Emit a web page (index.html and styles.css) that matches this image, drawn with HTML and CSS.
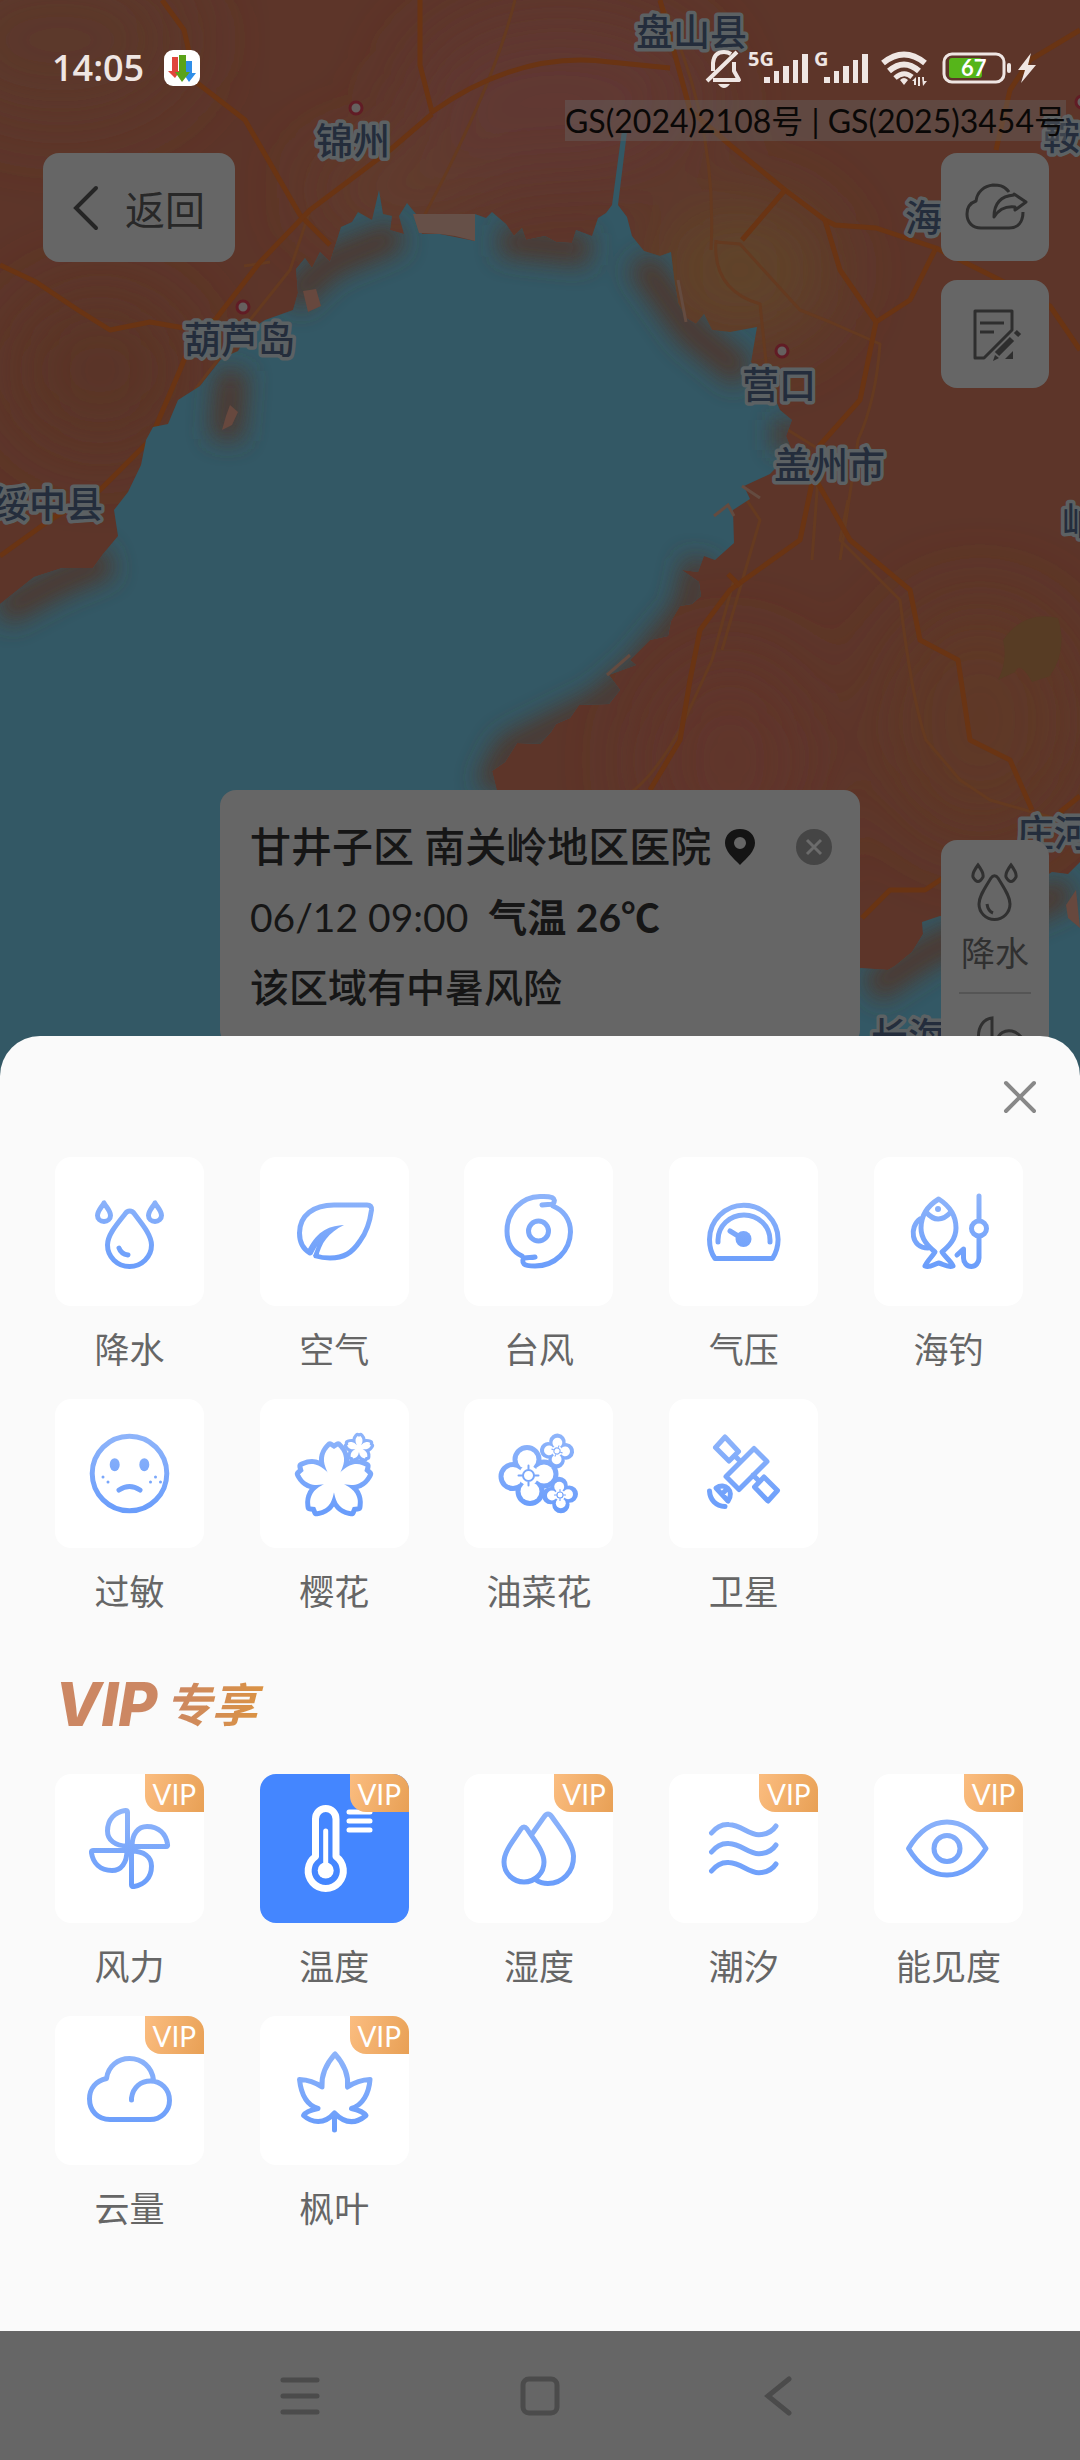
FILE: index.html
```html
<!DOCTYPE html>
<html lang="zh-CN">
<head>
  <meta charset="UTF-8" />
  <meta name="viewport" content="width=device-width, initial-scale=1.0"/>
  <title>天气地图</title>
  <link rel="stylesheet" href="styles.css">
</head>
<body>
  <!-- shared icon gradient -->
  <svg class="defs" width="0" height="0" aria-hidden="true">
    <defs>
      <linearGradient id="blue" gradientUnits="userSpaceOnUse" x1="0" y1="36" x2="0" y2="112">
        <stop offset="0" stop-color="#8eb4fa"/>
        <stop offset="1" stop-color="#6a9dfb"/>
      </linearGradient>
    </defs>
  </svg>

  <div class="screen">
    <main class="map">
      <svg class="map-canvas" viewBox="0 0 1080 1076" preserveAspectRatio="xMidYMin slice" aria-hidden="true">
        <defs>
          <filter id="soft" x="-50%" y="-50%" width="200%" height="200%"><feGaussianBlur stdDeviation="12"/></filter>
          <filter id="wide" x="-50%" y="-50%" width="200%" height="200%"><feGaussianBlur stdDeviation="40"/></filter>
          <path id="sea" d="M0 604L34 577L62 568L93 568L103 554L118 536L114 510L128 492L141 465L146 440L153 427L168 424L178 400L200 386L222 358L238 351L250 330L265 320L293 310L298 293L296 269L305 258L312 268L320 252L330 262L337 240L341 227L352 222L358 212L372 220L379 190L383 214L392 216L390 230L404 234L399 216L407 203L416 214L422 234L440 234L475 241L475 214L486 218L492 212L506 224L514 236L522 228L526 240L545 236L556 242L572 243L576 230L592 236L598 218L606 213L612 205L622 130L627 132L618 205L627 217L632 236L644 251L660 256L671 252L674 278L678 303L686 318L696 324L704 314L712 330L730 332L757 327L751 362L772 392L780 410L792 420L786 436L792 451L770 474L744 486L750 499L733 510L734 543L715 560L704 556L698 572L682 570L699 582L701 596L692 604L680 606L671 621L668 636L650 640L630 660L636 665L609 675L620 690L609 704L579 705L570 718L556 724L551 732L540 744L517 743L505 762L492 771L497 791L540 880L640 950L780 980L861 968L888 970L895 966L912 952L923 934L922 922L940 916L960 918L1030 886L1052 872L1068 874L1080 862V1080H0z"/>
          <clipPath id="seaClip"><use href="#sea"/></clipPath>
        </defs>
        <rect width="1080" height="1080" fill="#5d3529"/>
        <g filter="url(#wide)">
          <ellipse cx="560" cy="100" rx="150" ry="90" fill="#613730"/>
          <ellipse cx="740" cy="270" rx="90" ry="70" fill="#60442a"/>
          <ellipse cx="400" cy="190" rx="90" ry="40" fill="#623d2d"/>
          <ellipse cx="100" cy="370" rx="90" ry="80" fill="#5a3628"/>
          <ellipse cx="730" cy="760" rx="90" ry="110" fill="#60342b"/>
          <ellipse cx="980" cy="720" rx="100" ry="120" fill="#5e3926"/>
          <ellipse cx="60" cy="40" rx="130" ry="80" fill="#5c392b"/>
        </g>
        <path d="M1003 640Q1024 610 1058 618Q1068 650 1050 676L1032 682Q1020 660 1015 672L998 680Q1008 660 1003 640z" fill="#573c24"/>
        <g class="road thin">
          <path d="M515 0Q500 60 462 140Q440 190 330 390Q240 420 232 560"/>
          <path d="M711 250Q718 120 660 0M716 240Q712 290 760 304L772 420L820 450L812 560"/>
          <path d="M716 242L740 244L800 310L830 322L880 344Q876 400 858 440L840 560"/>
          <path d="M270 262L244 266M310 210L290 270L250 320L210 370L150 450"/>
          <path d="M734 580L712 660L680 730Q640 800 610 800M740 490L760 520L722 650"/>
          <path d="M848 500L840 540L900 600Q912 700 926 740L960 780L990 800L1060 820"/>
        </g>
        <g class="road">
          <path d="M162 0L184 30L196 82L245 120L300 215L330 245"/>
          <path d="M420 0L420 65L432 112Q520 50 610 62L670 68"/>
          <path d="M432 114L390 150L310 210L260 262L215 320L196 330L180 370L150 440L100 490L50 520L0 556"/>
          <path d="M0 265L36 282L78 310L110 330L150 322L184 328"/>
          <path d="M660 0L690 110L730 145L785 190L825 220L835 225L876 228L936 248L910 300L876 322"/>
          <path d="M785 190L742 240M825 220L840 270L876 322L860 400L820 445L800 540L730 590L700 630L690 680L680 740L650 790"/>
          <path d="M728 574L740 586M1080 30L1030 60L1010 90L996 150M936 248L1000 280L1050 306L1080 350"/>
          <path d="M816 480L850 540L910 590L920 640L958 660L970 740L1010 760L1032 810"/>
          <path d="M862 918L890 890L925 890L970 860M1060 812L1080 796"/>
        </g>
        <use href="#sea" fill="#335865"/>
        <g clip-path="url(#seaClip)">
          <path class="haze" d="M0 612L60 580L110 560M226 440L232 370M290 300L330 262L400 234M500 240L590 250M640 260L690 330L745 375M790 420L790 450M700 560L690 610L640 670L600 705L510 750L490 790M870 990L930 950L1070 890"/>
        </g>
        <path d="M419 233L413 214H475L475 241L455 236L440 234z" fill="#665048"/>
        <path d="M303 291L316 289L321 306L308 312zM230 405L238 412L232 425L222 430L226 416zM1066 905L1076 890L1080 928L1068 918z" fill="#67483e"/>
        <path d="M678 280L686 322M742 486L760 498M714 516L728 505L734 516M607 675L630 655" fill="none" stroke="#644b40" stroke-width="3"/>
        <g class="town">
          <circle cx="356" cy="108" r="6"/>
          <circle cx="243" cy="307" r="6"/>
          <circle cx="782" cy="351" r="6"/>
          <circle cx="1082" cy="102" r="6"/>
        </g>
        <g class="place">
          <text x="636" y="46">盘山县</text>
          <text x="316" y="155">锦州</text>
          <text x="184" y="354">葫芦岛</text>
          <text x="742" y="399">营口</text>
          <text x="774" y="479">盖州市</text>
          <text x="-8" y="518">绥中县</text>
          <text x="905" y="232">海</text>
          <text x="1043" y="150">鞍</text>
          <text x="1062" y="535">岫</text>
          <text x="1017" y="847">庄河</text>
          <text x="871" y="1050">长海</text>
        </g>
      </svg>

      <header class="status">
        <time>14:05</time>
        <svg width="36" height="36" viewBox="0 0 36 36" aria-hidden="true">
          <rect width="36" height="36" rx="9" fill="#fff"/>
          <path d="M8 7h6v14h2l-5 7-7-7h4z" fill="#e0453c"/>
          <path d="M22 11h6v12h4l-7 9-6-9h3z" fill="#2f8ee8"/>
          <path d="M15 5h7v17h4l-8 10-7-10h4z" fill="#5aa318"/>
        </svg>
        <svg class="signals" width="340" height="44" viewBox="700 46 340 44" fill="#efe6e3" aria-hidden="true">
          <g fill="none" stroke="#efe6e3" stroke-width="4" stroke-linejoin="round">
            <path d="M707 81L737 52M713 71V63Q714 52 724 52Q728 52 731 54M734 62V71L739 80H713"/>
            <path d="M883 63Q904 46 925 63" stroke-width="6"/>
            <path d="M889 71Q904 58 919 71" stroke-width="6"/>
            <path d="M895 78Q904 70 912 77" stroke-width="5"/>
            <rect x="944" y="54" width="60" height="28" rx="8" stroke-width="3"/>
          </g>
          <path d="M718 84h12q-6 8-12 0zM900 80q4-4 8 0l-4 5zM912 81l4-4v8h-2v-4zM918 77h2v9h-2zM922 77h2v4h3l-4 5z"/>
          <text x="748" y="66" class="net">5G</text>
          <path d="M764 77h6v6h-6zM774 71h5v12h-5zM783 66h6v17h-6zM793 60h5v23h-5zM802 54h6v29h-6z"/>
          <text x="814" y="66" class="net">G</text>
          <path d="M824 77h6v6h-6zM834 71h5v12h-5zM843 66h6v17h-6zM853 60h5v23h-5zM862 54h6v29h-6z"/>
          <rect x="949" y="58" width="33" height="20" rx="3" fill="#56b51a"/>
          <text x="961" y="76" class="charge">67</text>
          <rect x="1007" y="63" width="4" height="10" rx="2"/>
          <path d="M1031 53L1018 70h7l-4 13 15-18h-8z"/>
        </svg>
      </header>

      <p class="notice">GS(2024)2108号 | GS(2025)3454号</p>

      <div class="controls">
        <button type="button" class="back">
          <svg width="26" height="46" viewBox="0 0 26 46" fill="none" stroke="#252525" stroke-width="4" stroke-linecap="round" aria-hidden="true"><path d="M23 3L3 23l20 20"/></svg>
          返回
        </button>
        <div class="tools">
          <button type="button" class="tool" aria-label="分享">
            <svg width="108" height="108" viewBox="0 0 108 108" fill="none" stroke="#2e2e2e" stroke-width="3" stroke-linejoin="round" aria-hidden="true">
              <path d="M68 39C63 32 57 32 52 32C43 33 36 39 35 48C29 50 26 55 26 61C26 70 32 75 40 75H68C77 75 82 69 82 59"/>
              <path d="M53 64C53 50 60 43 73 42V41L85 49L74 57V54C65 53 58 56 53 64z"/>
            </svg>
          </button>
          <button type="button" class="tool" aria-label="编辑">
            <svg width="108" height="108" viewBox="0 0 108 108" fill="none" stroke="#2e2e2e" stroke-width="3" stroke-linejoin="round" aria-hidden="true">
              <path d="M34 31H71V50L43 78H34zM39 43H63M39 52H53"/>
              <path d="M56 74L71 59M75 55L78 52" stroke-width="6"/>
              <path d="M72 71V79H64zM54 75L58 78L52 81z" fill="#2e2e2e" stroke="none"/>
            </svg>
          </button>
        </div>
      </div>

      <div class="map-bottom">
        <section class="info">
          <div class="info-title">
            <h2>甘井子区 南关岭地区医院</h2>
            <svg width="30" height="36" viewBox="0 0 30 36" aria-hidden="true"><path d="M15 0C24 0 30 6 30 14C30 22 22 29 15 36C8 29 0 22 0 14C0 6 6 0 15 0zM15 8a6 6 0 1 0 0 12a6 6 0 1 0 0-12z" fill="#141414" fill-rule="evenodd"/></svg>
            <button type="button" class="info-close" aria-label="关闭">
              <svg width="36" height="36" viewBox="0 0 36 36" stroke="#6b6b6b" stroke-width="3" aria-hidden="true"><circle cx="18" cy="18" r="18" fill="#454545" stroke="none"/><path d="M11 11l14 14M25 11L11 25"/></svg>
            </button>
          </div>
          <p>06/12 09:00&nbsp; <b>气温 26℃</b></p>
          <p class="risk">该区域有中暑风险</p>
        </section>
        <nav class="rail">
          <button type="button">
            <svg width="108" height="62" viewBox="21 40 108 62" fill="none" stroke="#303030" stroke-width="3" aria-hidden="true">
              <path d="M71 56C73 53 76 53 78 56C84 66 90 74 90 82a15 15 0 0 1-31 0C59 74 65 66 71 56z"/>
              <path d="M67 82Q68 89 73 91M58 43Q52 51 53 55q5 9 10 0Q64 51 58 43zM91 43Q85 51 86 55q5 9 10 0Q97 51 91 43z"/>
            </svg>
            降水
          </button>
          <button type="button" aria-label="风力">
            <svg width="108" height="60" viewBox="24 36 108 60" fill="none" stroke="#303030" stroke-width="3" aria-hidden="true">
              <path d="M75 38V72C57 72 57 40 75 38zM79 72V62C84 44 106 48 110 70z"/>
            </svg>
          </button>
        </nav>
      </div>
    </main>

    <section class="sheet">
      <div class="sheet-head">
        <button type="button" class="close" aria-label="关闭">
          <svg width="34" height="34" viewBox="0 0 34 34" stroke="#888" stroke-width="4" stroke-linecap="round" aria-hidden="true"><path d="M3 3l28 28M31 3L3 31"/></svg>
        </button>
      </div>

      <div class="grid">
        <button type="button" class="item">
          <span class="tile">
            <svg class="icon" viewBox="0 0 149 149">
              <path d="M70 57C72.500 53 77 53 79.500 57C87 67 96.500 78 96.500 88a22 21.500 0 0 1-44 0C52.500 78 62 67 70 57zM64 91Q66 97 73 98"/>
              <path d="M49 46C46 51 42.500 54 42.500 58.500a6.500 6 0 0 0 13 0C55.500 54 52 51 49 46zM100 46C97 51 93.500 54 93.500 58.500a6.500 6 0 0 0 13 0C106.500 54 103 51 100 46z"/>
            </svg>
          </span>
          降水
        </button>
        <button type="button" class="item">
          <span class="tile">
            <svg class="icon" viewBox="0 0 149 149">
              <path d="M50 96C43 92 39.500 85 39.500 76C39.500 58 54 48 74 48H107Q112 48 111.500 53C110 64 106 76 100 84C92 96 84 101 70 101Q62 101 56 99"/>
              <path class="solid" d="M84 68C66 69 56 76 47 94L52 98L57 89L53 99L58 101C61 86 68 76 84 68z"/>
            </svg>
          </span>
          空气
        </button>
        <button type="button" class="item">
          <span class="tile">
            <svg class="icon" viewBox="0 0 149 149">
              <path d="M78 48C82 47 86 48 89 47C91 44 91 42 88 40.500C84 39 80 39.500 76 39.500C57 40 43 55 43 74C43 86 49 95 58 99"/>
              <path d="M89 49C99 53 106.500 62 106.500 75C106 94 91 109 71 109C66 109 62 109 60 107C58 105 59 102 60 101C64 100 67 101 71 100"/>
              <circle cx="74.500" cy="74" r="10"/>
            </svg>
          </span>
          台风
        </button>
        <button type="button" class="item">
          <span class="tile">
            <svg class="icon" viewBox="0 0 149 149">
              <path d="M46 101.500C42 96 40.500 90 40.500 82.500a34.300 34.300 0 0 1 68.600 0C109 90 107 96 103.500 101.500zM49 85v-2a26 25 0 0 1 52 0v2M61 74L74 82"/>
              <circle class="solid" cx="74.500" cy="82" r="8"/>
            </svg>
          </span>
          气压
        </button>
        <button type="button" class="item">
          <span class="tile">
            <svg class="icon" viewBox="0 0 149 149">
              <path d="M64.700 42C55 48 47 58 47 71C47 82 54 89 61 95C58 100 53 104 51 109C56 111 60 107 64.700 106C69 107 74 111 79 109C77 104 71 100 68 95C75 89 82 82 82 71C82 58 74 48 64.700 42z"/>
              <path d="M52 55Q64 69 77 55M46 62C35 70 37 91 54 91"/>
              <circle class="solid" cx="64" cy="52" r="3"/>
              <path d="M105 39V63M105 80V101a7.700 8.500 0 0 1-15.500 0V92L83 98"/>
              <circle cx="105" cy="71.500" r="7.500"/>
            </svg>
          </span>
          海钓
        </button>

        <button type="button" class="item">
          <span class="tile">
            <svg class="icon" viewBox="0 0 149 149">
              <circle cx="74.500" cy="74.500" r="37.300"/>
              <path d="M64 91Q74.500 84 85 91"/>
              <g class="solid">
                <ellipse cx="59.700" cy="65.700" rx="5" ry="6.500"/><ellipse cx="89.300" cy="65.700" rx="5" ry="6.500"/>
                <circle cx="48" cy="78" r="1.500"/><circle cx="53" cy="83" r="1.500"/><circle cx="100.500" cy="78" r="1.500"/><circle cx="95.500" cy="83" r="1.500"/><circle cx="105.500" cy="83" r="1.500"/>
              </g>
            </svg>
          </span>
          过敏
        </button>
        <button type="button" class="item">
          <span class="tile">
            <svg class="icon" viewBox="0 0 149 149">
              <defs>
                <path id="petal" d="M-4 2C-4 -8 -11 -14 -10 -23C-9 -30 -6 -32 -4 -34.500L0 -32L4 -34.500C6 -32 9 -30 10 -23C11 -14 4 -8 4 2z"/>
                <g id="sakura">
                  <use href="#petal"/><use href="#petal" transform="rotate(72)"/><use href="#petal" transform="rotate(144)"/><use href="#petal" transform="rotate(216)"/><use href="#petal" transform="rotate(288)"/>
                </g>
                <mask id="sakuraMask" maskUnits="userSpaceOnUse" x="0" y="0" width="149" height="149">
                  <use href="#sakura" x="74" y="82" fill="#fff" stroke="#fff" stroke-width="10"/>
                  <use href="#sakura" transform="translate(99 49) scale(.35)" fill="#fff" stroke="#fff" stroke-width="18"/>
                  <use href="#sakura" x="74" y="82" fill="#000" stroke="none"/>
                  <use href="#sakura" transform="translate(99 49) scale(.35)" fill="#000" stroke="none"/>
                </mask>
              </defs>
              <rect class="solid" width="149" height="149" mask="url(#sakuraMask)"/>
            </svg>
          </span>
          樱花
        </button>
        <button type="button" class="item">
          <span class="tile">
            <svg class="icon" viewBox="0 0 149 149">
              <defs>
                <g id="rape">
                  <circle cx="-1.500" cy="-16" r="12"/><circle cx="-15.500" cy="1" r="12"/><circle cx="1.500" cy="16" r="12"/><circle cx="15.500" cy="-1.500" r="12"/>
                </g>
                <g id="rapeFill">
                  <circle cx="-1.500" cy="-16" r="9.500"/><circle cx="-15.500" cy="1" r="9.500"/><circle cx="1.500" cy="16" r="9.500"/><circle cx="15.500" cy="-1.500" r="9.500"/><circle r="10"/>
                </g>
                <path id="rapeCore" d="M0 -5.500a5.500 5.500 0 1 0 0 11a5.500 5.500 0 1 0 0-11zM0 -5.500V-10M0 5.500V10M-5.500 0H-10M5.500 0H10"/>
                <mask id="rapeMask" maskUnits="userSpaceOnUse" x="0" y="0" width="149" height="149">
                  <g fill="#fff" stroke="#fff" stroke-width="5">
                    <use href="#rape" x="64.500" y="76.500"/><use href="#rape" transform="translate(93 52) rotate(8) scale(.57)"/><use href="#rape" transform="translate(96 96) scale(.6)"/>
                  </g>
                  <g fill="#000" stroke="none">
                    <use href="#rapeFill" x="64.500" y="76.500"/><use href="#rapeFill" transform="translate(93 52) rotate(8) scale(.52)"/><use href="#rapeFill" transform="translate(96 96) scale(.52)"/>
                  </g>
                  <g fill="none" stroke="#fff" stroke-width="2">
                    <use href="#rapeCore" x="64.500" y="76.500"/><use href="#rapeCore" transform="translate(93 52) rotate(20) scale(.55)"/><use href="#rapeCore" transform="translate(96 96) scale(.55)"/>
                  </g>
                </mask>
              </defs>
              <rect class="solid" width="149" height="149" mask="url(#rapeMask)"/>
            </svg>
          </span>
          油菜花
        </button>
        <button type="button" class="item">
          <span class="tile">
            <svg class="icon" viewBox="0 0 149 149">
              <path d="M85 49.500L98 62.500L70 90.500L57 77.500zM56 38L69.500 52.500L60 62L46.500 48.500zM95 78L108.500 91.500L99 102L85.500 88zM67 58L71 62M84 76L89 81"/>
              <path d="M47 89C56 83 66 92 59 102zM53 95L56 92M40.500 92C41 101 47 107 56 107.500"/>
            </svg>
          </span>
          卫星
        </button>
      </div>

      <h3 class="vip-title"><span>VIP</span>专享</h3>

      <div class="grid">
        <button type="button" class="item">
          <span class="tile">
            <svg class="icon" viewBox="0 0 149 149">
              <path d="M72.500 38V72C60 72 52.500 66 52.500 57C52.500 45 60 38 70 36.500Q72.500 36 72.500 38z"/>
              <path d="M111 72.500H77C77 60 83 52.500 92 52.500C104 52.500 111 60 112.500 70Q113 72.500 111 72.500z"/>
              <path d="M76.500 111V77C89 77 96.500 83 96.500 92C96.500 104 89 111 79 112.500Q76.500 113 76.500 111z"/>
              <path d="M38 76.500H72C72 89 66 96.500 57 96.500C45 96.500 38 89 36.500 79Q36 76.500 38 76.500z"/>
              <path d="M73 73l3 3"/>
            </svg>
            <em class="badge">VIP</em>
          </span>
          风力
        </button>
        <button type="button" class="item active" aria-pressed="true">
          <span class="tile">
            <svg class="icon" viewBox="0 0 149 149">
              <path d="M55.500 82.500V45a10.200 10.500 0 0 1 20.500 0V82.500A17.600 17.600 0 1 1 55.500 82.500z" stroke-width="7"/>
              <path d="M65.700 57V96M89 38H110M89 47H110M89 56H110"/>
              <circle class="solid" cx="65.700" cy="96.500" r="8"/>
            </svg>
            <em class="badge">VIP</em>
          </span>
          温度
        </button>
        <button type="button" class="item">
          <span class="tile">
            <svg class="icon" viewBox="0 0 149 149">
              <path d="M57 55Q60 51 63 55C70 66 80 77 80 88a20 20 0 0 1-40 0C40 77 50 66 57 55z"/>
              <path d="M68 60L80 43Q84 37 88 43C97 56 109 70 109.500 82C110 98 98 109.500 84 109.500Q77 109.500 72 106"/>
            </svg>
            <em class="badge">VIP</em>
          </span>
          湿度
        </button>
        <button type="button" class="item">
          <span class="tile">
            <svg class="icon" viewBox="0 0 149 149">
              <path d="M42.500 59C48 52 54 50 60 50.500C72 51 80 61 90 60.700C97 60.500 103 58 107 52M42.500 78C48 71 54 69 60 69.500C72 70 80 80 90 79.700C97 79.500 103 77 107 71M42.500 97C48 90 54 88 60 88.500C72 89 80 99 90 98.700C97 98.500 103 96 107 90"/>
            </svg>
            <em class="badge">VIP</em>
          </span>
          潮汐
        </button>
        <button type="button" class="item">
          <span class="tile">
            <svg class="icon" viewBox="0 0 149 149">
              <path d="M34.500 74.500C45 57 57 48 73 48C89 48 101 57 112 74.500C101 92 89 101 73 101C57 101 45 92 34.500 74.500z"/>
              <circle cx="73" cy="74.500" r="13"/>
            </svg>
            <em class="badge">VIP</em>
          </span>
          能见度
        </button>

        <button type="button" class="item">
          <span class="tile">
            <svg class="icon" viewBox="0 0 149 149">
              <path d="M76.500 84V82C78 71 86 65 95.500 65C106 65 114.500 73 114.500 84.500C114.500 95 106 103.500 95 103.500H55C43 103.500 34.500 95 34.500 83C34.500 72 41 65 51.500 62.500C53 50 63 42.500 74.500 42.500C87 42.500 97 51 98.500 64"/>
            </svg>
            <em class="badge">VIP</em>
          </span>
          云量
        </button>
        <button type="button" class="item">
          <span class="tile">
            <svg class="icon" viewBox="0 0 149 149">
              <path d="M75 38C67 47 61 58 62 71Q52 64 39.500 63.500C41 77 46 89 58 92.500Q46 95 43.500 99.500C52 107 64 109 74.500 97C86 109 97 107 106 99.500Q103 95 91.500 92.500C103 89 109 77 110 63.500Q98 64 87.500 71C89 58 83 47 75 38zM74.500 98V114"/>
            </svg>
            <em class="badge">VIP</em>
          </span>
          枫叶
        </button>
      </div>
    </section>

    <footer class="system-nav">
      <button type="button" aria-label="菜单"><svg width="40" height="40" viewBox="0 0 40 40"><path d="M3 4H37M3 20H37M3 36H37"/></svg></button>
      <button type="button" aria-label="主页"><svg width="40" height="40" viewBox="0 0 40 40"><rect x="3" y="3" width="34" height="34" rx="6"/></svg></button>
      <button type="button" aria-label="返回"><svg width="40" height="40" viewBox="0 0 40 40"><path d="M29 3L8 20L29 37"/></svg></button>
    </footer>
  </div>
</body>
</html>
```
FILE: styles.css
```css
* {
  box-sizing: border-box;
}
body {
  margin: 0;
  background: #666;
  font-family: Lato, "Noto Sans CJK SC", sans-serif;
}
h2, h3, p {
  margin: 0;
}
button {
  border: 0;
  padding: 0;
  background: none;
  font-family: inherit;
  color: inherit;
  cursor: pointer;
}
svg {
  display: block;
}
.defs {
  position: absolute;
}
.screen {
  display: flex;
  flex-direction: column;
  min-height: 100vh;
}

/* map */
.map {
  position: relative;
  flex: 1;
  overflow: hidden;
  background: #335865;
}
.map-canvas {
  position: absolute;
  top: 0;
  left: 0;
  width: 100%;
  height: 100%;
}
.road {
  fill: none;
  stroke: #6a3413;
  stroke-width: 5;
  stroke-linejoin: round;
}
.road.thin {
  stroke: #653a20;
  stroke-width: 3;
}
.haze {
  fill: none;
  stroke: #4d372f;
  stroke-width: 32;
  stroke-linejoin: round;
  filter: url(#soft);
}
.town {
  fill: #66605f;
  stroke: #611c25;
  stroke-width: 3;
}
.place {
  font-family: "Noto Sans CJK SC", sans-serif;
  font-size: 37px;
  font-weight: 500;
  fill: #242d3c;
  stroke: #5c6163;
  stroke-width: 7;
  stroke-linejoin: round;
  paint-order: stroke;
}
.status {
  position: relative;
  display: flex;
  align-items: center;
  gap: 20px;
  height: 88px;
  padding: 48px 40px 0 52px;
  color: #efe6e3;
}
.status time {
  font-size: 36px;
  line-height: 40px;
  font-weight: 600;
  font-family: "Open Sans", sans-serif;
}
.signals {
  margin-left: auto;
}
.net {
  font: bold 20px "Open Sans", sans-serif;
}
.charge {
  font: bold 22px Lato, sans-serif;
  fill: #fff;
}
.notice {
  position: relative;
  width: fit-content;
  margin: 12px 14px 0 auto;
  background: rgba(102, 102, 102, 0.4);
  color: #0a0807;
  font-size: 32px;
  line-height: 41px;
}
.controls {
  position: relative;
  display: flex;
  justify-content: space-between;
  align-items: flex-start;
  padding: 12px 31px 0 43px;
}
.back {
  display: flex;
  align-items: center;
  gap: 26px;
  height: 109px;
  padding: 0 30px;
  border-radius: 16px;
  background: #666;
  color: #282828;
  font-size: 40px;
}
.tools {
  display: flex;
  flex-direction: column;
  gap: 19px;
}
.tool {
  width: 108px;
  height: 108px;
  border-radius: 16px;
  background: #666;
}
.map-bottom {
  position: relative;
  display: flex;
  justify-content: space-between;
  height: 286px;
  margin-top: 402px;
  padding: 0 31px 0 220px;
}
.info {
  width: 640px;
  height: 256px;
  padding: 22px 28px 24px 30px;
  border-radius: 16px;
  background: #666;
  color: #161616;
  font-size: 39px;
  line-height: 70px;
}
.info-title {
  display: flex;
  align-items: center;
}
.info h2 {
  margin-right: 14px;
  font-size: 41px;
  font-weight: 500;
}
.info-close {
  margin-left: auto;
}
.risk {
  font-weight: 500;
}
.rail {
  width: 108px;
  height: 300px;
  margin-top: 50px;
  border-radius: 16px;
  background: #666;
  color: #303030;
}
.rail button {
  display: block;
  width: 100%;
  padding: 22px 0 12px;
  font-size: 34px;
  line-height: 58px;
}
.rail button:first-child {
  height: 154px;
  background: linear-gradient(#555, #555) center bottom / 72px 2px no-repeat;
}

/* bottom sheet */
.sheet {
  position: relative;
  margin-top: -40px;
  padding: 0 29px 96px 27px;
  border-radius: 40px 40px 0 0;
  background: #fafafa;
}
.sheet-head {
  display: flex;
  justify-content: flex-end;
  align-items: center;
  height: 121px;
  padding: 0 14px;
}
.grid {
  display: grid;
  grid-template-columns: repeat(5, 1fr);
  row-gap: 23px;
}
.item {
  display: flex;
  flex-direction: column;
  align-items: center;
  gap: 16px;
  color: #666;
  font-size: 35px;
  line-height: 54px;
}
.tile {
  position: relative;
  width: 149px;
  height: 149px;
  border-radius: 16px;
  background: #fff;
  overflow: hidden;
}
.icon {
  width: 149px;
  height: 149px;
  fill: none;
  stroke: url(#blue);
  stroke-width: 5;
  stroke-linecap: round;
  stroke-linejoin: round;
}
.icon .solid {
  fill: url(#blue);
  stroke: none;
}
.active .tile {
  background: #4486ff;
}
.active .icon {
  stroke: #fff;
}
.active .icon .solid {
  fill: #fff;
}
.badge {
  position: absolute;
  top: 0;
  right: 0;
  width: 59px;
  height: 38px;
  border-bottom-left-radius: 16px;
  background: linear-gradient(110deg, #fbbd80, #e8a055);
  color: #fff;
  font-size: 28px;
  line-height: 40px;
  font-style: normal;
  text-align: center;
}
.vip-title {
  display: flex;
  align-items: center;
  gap: 8px;
  width: fit-content;
  margin: 46px 0 29px;
  padding: 0 8px 0 28px;
  background: linear-gradient(100deg, #cc8763 60%, #dc9440);
  -webkit-background-clip: text;
  background-clip: text;
  color: transparent;
  font-size: 46px;
  line-height: 81px;
  font-style: italic;
}
.vip-title span {
  font-family: Inter, sans-serif;
  font-size: 60px;
  font-weight: 800;
}

/* system bar */
.system-nav {
  display: grid;
  grid-template-columns: repeat(3, 1fr);
  height: 130px;
  padding: 0 180px;
}
.system-nav button {
  display: flex;
  justify-content: center;
  align-items: center;
}
.system-nav svg {
  fill: none;
  stroke: #4b4b4b;
  stroke-width: 5;
  stroke-linecap: round;
}
```
